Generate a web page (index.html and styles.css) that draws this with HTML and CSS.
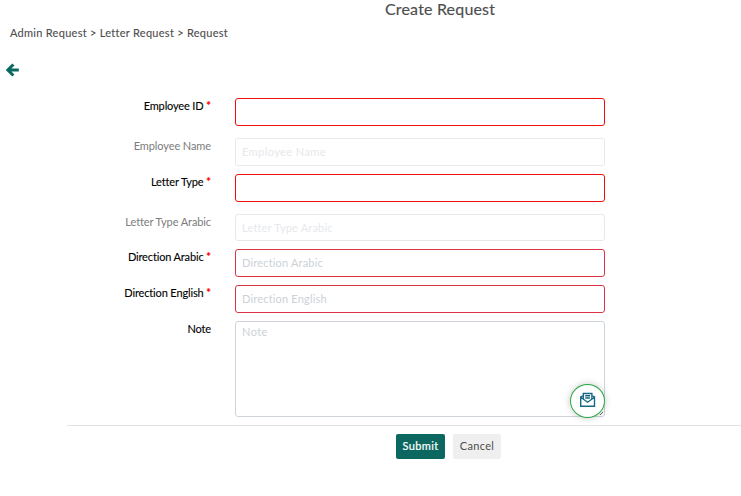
FILE: index.html
```html
<!DOCTYPE html>
<html lang="en">
<head>
<meta charset="utf-8">
<title>Create Request</title>
<link rel="stylesheet" href="styles.css">
</head>
<body>
<header class="header">
  <h1 class="title"><span>Create Request</span></h1>
  <nav class="breadcrumb"><span>Admin Request &gt; Letter Request &gt; Request</span></nav>
  <a class="back" aria-label="Back"><svg width="13" height="14" viewBox="0 0 13 14"><path d="M7.4 1.5 1.9 7l5.5 5.5M2.4 7H12.8" fill="none" stroke="#086860" stroke-width="2.9"/></svg></a>
</header>
<form class="form">
  <div class="row wide"><label><span>Employee ID</span> <b>*</b></label><input class="required"></div>
  <div class="row muted"><label><span>Employee Name</span></label><input placeholder="Employee Name" disabled></div>
  <div class="row wide"><label><span>Letter Type</span> <b>*</b></label><input class="required"></div>
  <div class="row muted short"><label><span>Letter Type Arabic</span></label><input class="tight" placeholder="Letter Type Arabic" disabled></div>
  <div class="row"><label><span>Direction Arabic</span> <b>*</b></label><input class="invalid tight" placeholder="Direction Arabic"></div>
  <div class="row"><label><span>Direction English</span> <b>*</b></label><input class="invalid tight" placeholder="Direction English"></div>
  <div class="row note"><label><span>Note</span></label>
    <div class="note-field"><textarea placeholder="Note"></textarea>
      <div class="mail"><svg width="17" height="16" viewBox="0 0 17 16" fill="none" stroke="#176a86" stroke-width="1.4"><path d="M3.8 3.8 1.7 5v9.2h13.8V5l-2.1-1.2M1.7 5.2l6.9 5 6.9-5"/><path d="M4.3 7V1.5h8.6V7M6.2 3.7h4.8M6.2 6h4.8"/></svg></div>
    </div>
  </div>
</form>
<footer class="actions"><button class="submit">Submit</button><button class="cancel">Cancel</button></footer>
</body>
</html>
```
FILE: styles.css
```css
* { box-sizing: border-box; }
body { margin: 0; height: 496px; overflow: hidden; background: #fff; color: #4d4d4d; font-family: Lato, sans-serif; font-size: 11px; }
.header { height: 98px; display: flex; flex-direction: column; }
.title { margin: 0; padding-left: 385px; height: 24px; font-size: 16px; font-weight: 400; line-height: 17px; letter-spacing: .18px; -webkit-text-stroke: .15px; }
.breadcrumb { padding-left: 10px; height: 39px; line-height: 18px; font-size: 11px; letter-spacing: .28px; -webkit-text-stroke: .1px; }
.back { padding-left: 6px; height: 14px; }
.back svg, .mail svg { display: block; }
.form { width: 605px; }
.row { display: grid; grid-template-columns: 211px 370px; column-gap: 24px; height: 28px; margin-bottom: 8px; color: #000; }
.wide { margin-bottom: 12px; }
.muted { color: #7b7b7b; }
.short { height: 27px; }
label { text-align: right; line-height: 15px; letter-spacing: -.15px; -webkit-text-stroke: .1px; }
.muted label { letter-spacing: -.1px; -webkit-text-stroke: 0; }
label b { color: #f00; font-weight: 700; letter-spacing: .15px; }
input, textarea { display: block; width: 370px; height: 100%; margin: 0; padding: 0 6px 1px; border: 1px solid #ced4da; border-radius: 3px; background: #fff; font: 11px Lato, sans-serif; letter-spacing: .42px; outline: 0; }
.tight { letter-spacing: .18px; }
input::placeholder, textarea::placeholder { color: #cbd1d7; opacity: 1; }
input:disabled { border-color: #e6e8eb; }
input:disabled::placeholder { color: #e6e8eb; }
.required { border-color: #f00f0f; }
.invalid { border-color: #dc3545; }
.note { height: 96px; }
.note-field { position: relative; }
textarea { height: 96px; padding-top: 3px; resize: vertical; }
.mail { position: absolute; right: 0; bottom: -1px; width: 35px; height: 34px; display: grid; place-items: center; border: 1px solid #28a745; border-radius: 50%; background: #fff; box-shadow: 0 0 7px rgba(0, 0, 0, .22); }
.mail svg { margin-top: -2px; }
.actions { margin-left: 67px; height: 50px; border-top: 1px solid #e3e3e3; padding: 8px 0 0 329px; display: flex; gap: 8px; }
button { height: 25px; padding: 0 0 3px; border: 0; border-radius: 2px; font: 11px Lato, sans-serif; letter-spacing: .35px; }
.submit { width: 49px; background: #0b675f; color: #fff; -webkit-text-stroke: .2px; }
.cancel { width: 48px; background: #efefef; color: #4d4d4d; }
```
